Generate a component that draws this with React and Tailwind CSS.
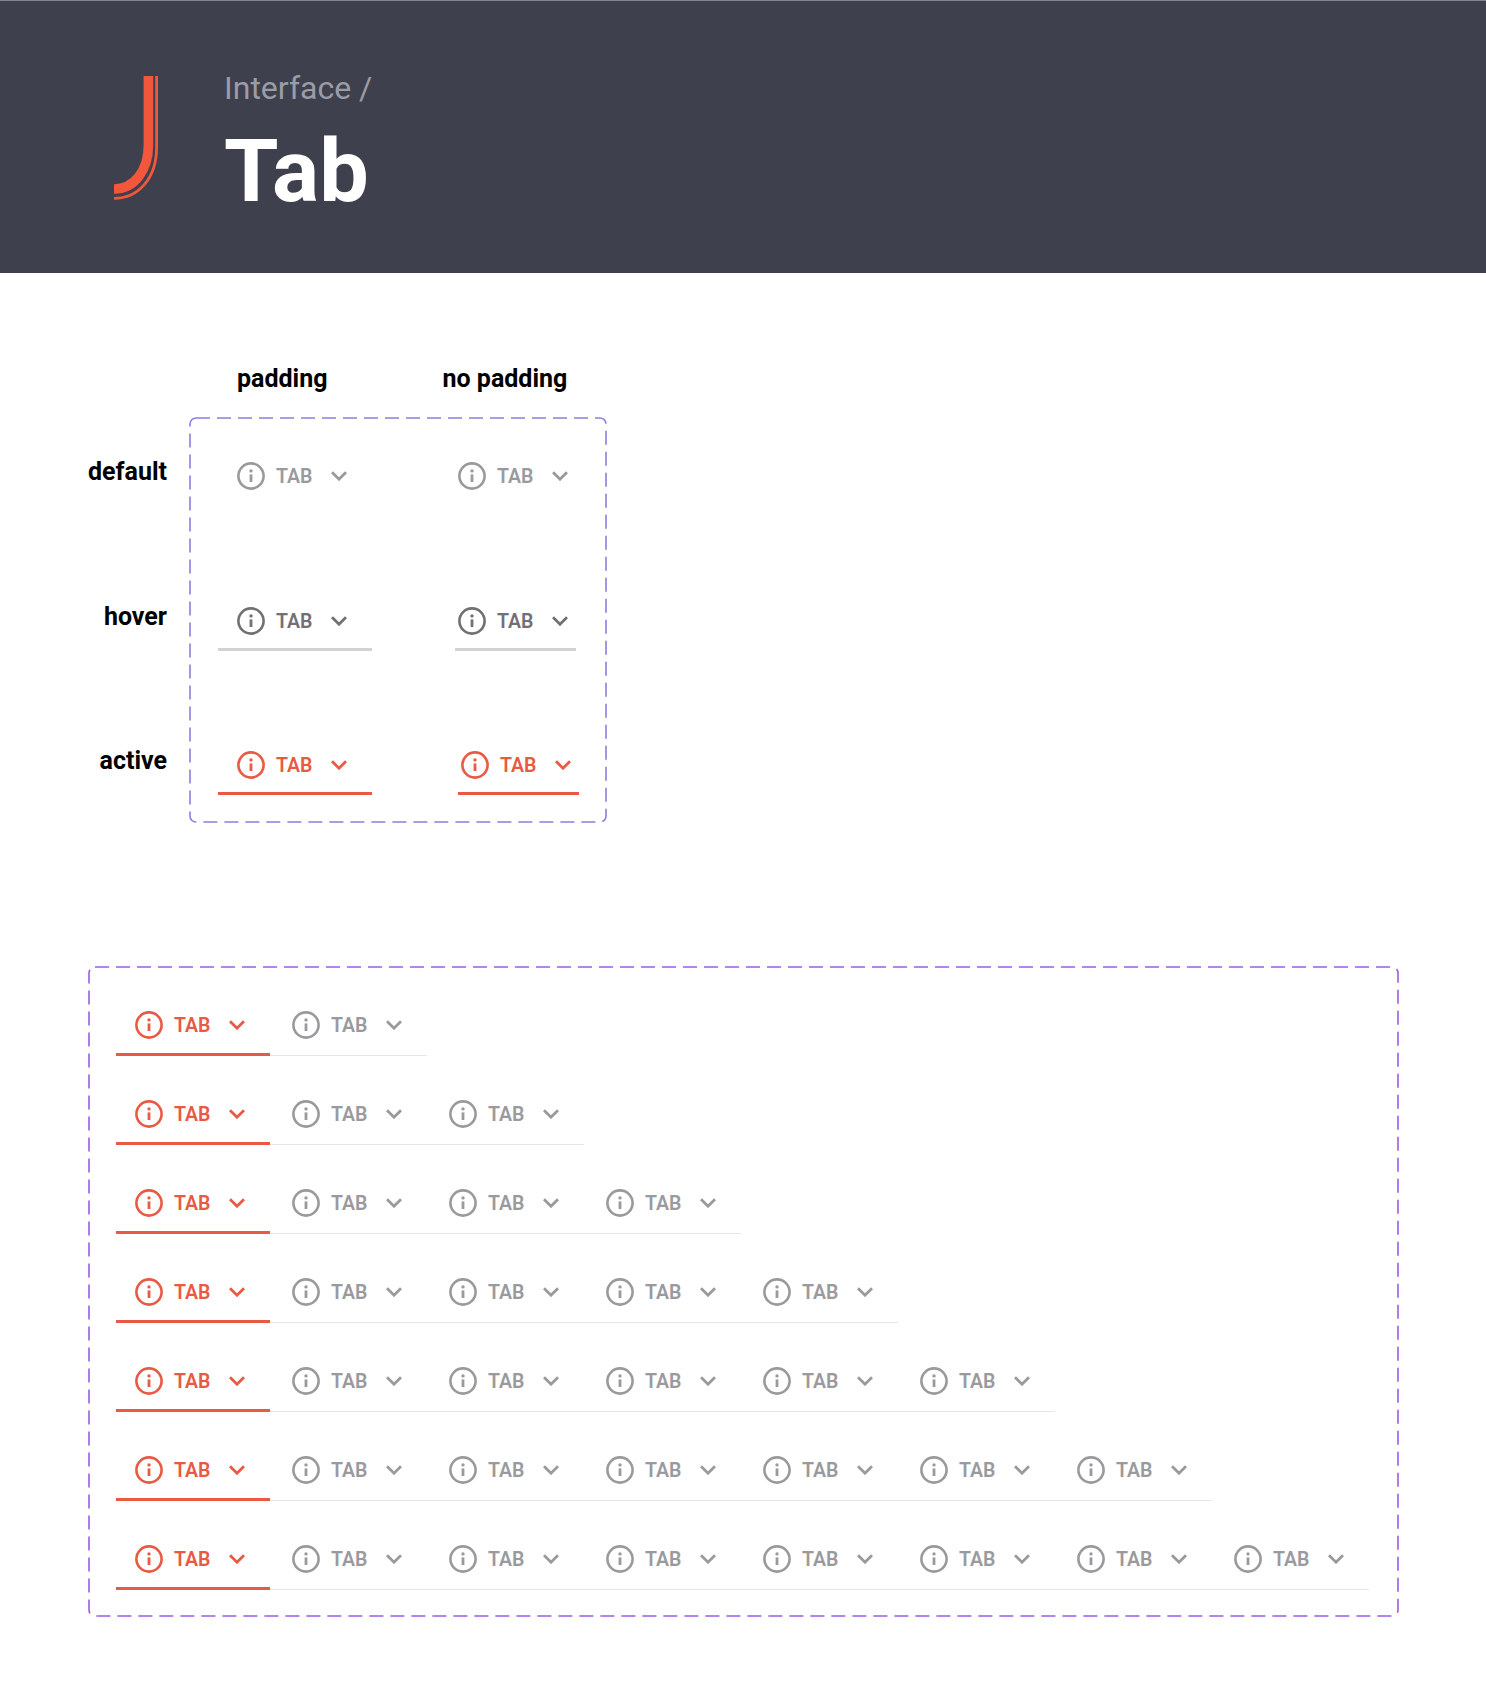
function InfoIcon() {
  return (
    <svg width="28" height="28" viewBox="0 0 28 28" fill="none" className="shrink-0">
      <circle cx="14" cy="14" r="12.6" stroke="currentColor" strokeWidth="2.6" />
      <circle cx="14" cy="8.9" r="1.7" fill="currentColor" />
      <path d="M14 12.4V20" stroke="currentColor" strokeWidth="2.8" />
    </svg>
  );
}

function Chevron() {
  return (
    <svg width="16" height="10" viewBox="0 0 16 10" fill="none" className="shrink-0">
      <path d="M1 1.3L8 8.2L15 1.3" stroke="currentColor" strokeWidth="2.8" />
    </svg>
  );
}

function Tab({ state = "default", compact = false, shift = false, short = false }) {
  const tone =
    state === "active"
      ? "text-[#e85a44]"
      : state === "hover"
        ? "text-[#707075]"
        : "text-[#9a9a9e]";
  const line =
    state === "active"
      ? "border-[#e85a44]"
      : state === "hover"
        ? "border-[#d2d2d2]"
        : "border-transparent";
  return (
    <div
      className={`flex shrink-0 items-start border-b-[3px] ${short ? "h-[44px]" : "h-[45px]"} ${line} ${tone} ${
        compact ? "w-[121px] pl-[3px]" : "w-[154px] pl-[19px]"
      } ${shift ? "ml-[3px]" : ""}`}
    >
      <InfoIcon />
      <span className="ml-[11px] w-[38px] text-[19.5px] font-semibold leading-[30px]">TAB</span>
      <span className="ml-[17px] flex h-[28px] items-center">
        <Chevron />
      </span>
    </div>
  );
}

function DashedFrame({ w, h, color }) {
  return (
    <svg width={w} height={h} className="pointer-events-none absolute left-0 top-0" fill="none">
      <rect
        x="1"
        y="1"
        width={w - 2}
        height={h - 2}
        rx="6"
        stroke={color}
        strokeWidth="1.6"
        strokeDasharray="14 7"
      />
    </svg>
  );
}

function Logo() {
  return (
    <svg width="46" height="126" viewBox="0 0 46 126" fill="none" className="shrink-0">
      <path d="M34.4 1V70C34.4 96 20 114 0 114" stroke="#f2573c" strokeWidth="9.6" />
      <path d="M42.6 1V72C42.6 104 24 123.4 0 123.4" stroke="#f2573c" strokeWidth="2.8" />
    </svg>
  );
}

const counts = [2, 3, 4, 5, 6, 7, 8];

export default function App() {
  return (
    <div className="h-[1705px] w-[1486px] bg-white font-['Roboto',sans-serif] text-black">
      <header className="flex h-[273px] items-start border-t border-[#85858d] bg-[#3f404d] pl-[114px] pt-[74px]">
        <Logo />
        <div className="ml-[64px] flex flex-col">
          <div className="mt-[-6px] text-[32px] leading-[38px] text-[#9b9ca7]">Interface /</div>
          <div className="mt-[12px] text-[88px] font-bold leading-[104px] text-white">Tab</div>
        </div>
      </header>

      <section className="pl-[88px]">
        <div className="flex pt-[92px] text-[25px] font-bold leading-[28px]">
          <span className="ml-[149px]">padding</span>
          <span className="ml-[115px]">no padding</span>
        </div>
        <div className="mt-[24px] flex items-start">
          <div className="w-[79px] pt-[41px] text-right text-[25px] font-bold leading-[28px]">
            <div className="h-[144.5px]">default</div>
            <div className="h-[144.5px]">hover</div>
            <div>active</div>
          </div>
          <div className="relative ml-[22px] h-[406px] w-[418px] pl-[29px] pt-[45px]">
            <DashedFrame w={418} h={406} color="#8d7ddd" />
            <div className="grid grid-cols-[237px_1fr] gap-y-[100.5px]">
              <Tab short />
              <Tab short compact />
              <Tab short state="hover" />
              <Tab short state="hover" compact />
              <Tab short state="active" />
              <Tab short state="active" compact shift />
            </div>
          </div>
        </div>
      </section>

      <section className="pl-[88px] pt-[143px]">
        <div className="relative h-[651px] w-[1311px] pl-[28px] pt-[45px]">
          <DashedFrame w={1311} h={651} color="#9a5ce6" />
          <div className="flex flex-col items-start gap-[44px]">
            {counts.map((count) => (
              <div key={count} className="flex gap-[3px] border-b border-[#e6e6e8]">
                {Array.from({ length: count }, (_, i) => (
                  <div key={i} className="mb-[-1px]">
                    <Tab state={i === 0 ? "active" : "default"} />
                  </div>
                ))}
              </div>
            ))}
          </div>
        </div>
      </section>
    </div>
  );
}
